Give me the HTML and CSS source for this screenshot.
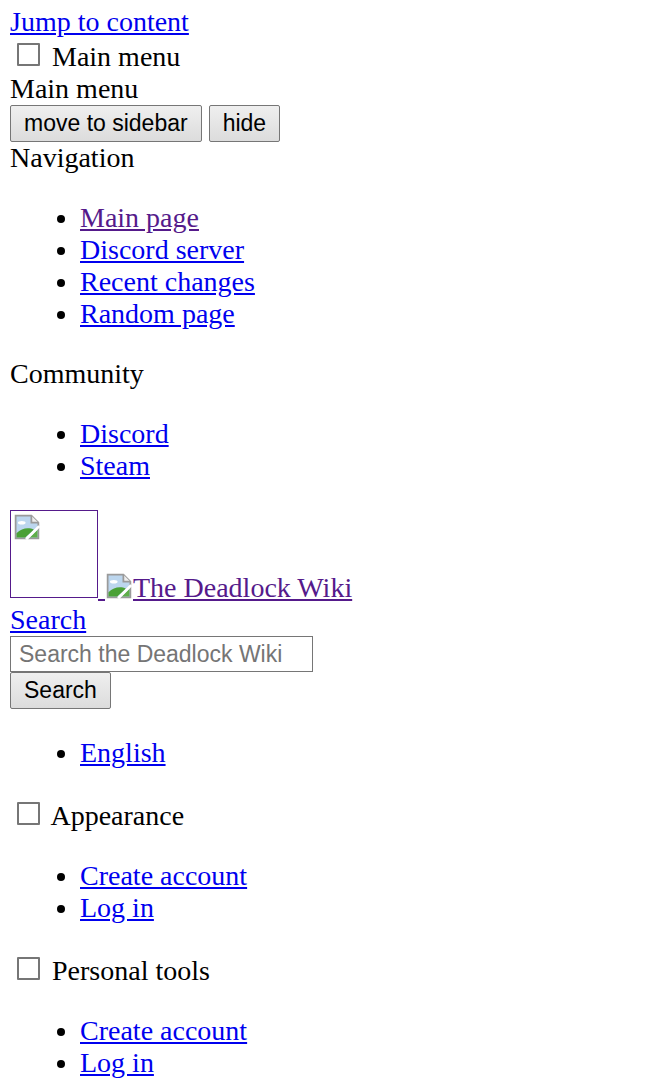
FILE: index.html
```html
<!DOCTYPE html>
<html lang="en">
<head>
    <meta charset="UTF-8">
    <title>The Deadlock Wiki</title>
    <link rel="stylesheet" href="styles.css">
</head>
<body>
    <a href="#content">Jump to content</a>
    <div>
        <input type="checkbox" id="main-menu-check"> <label for="main-menu-check">Main menu</label>
    </div>
    <div>Main menu</div>
    <div class="menu-actions">
        <button>move to sidebar</button> <button>hide</button>
    </div>
    <div>Navigation</div>
    <ul>
        <li><a class="visited" href="#">Main page</a></li>
        <li><a href="#">Discord server</a></li>
        <li><a href="#">Recent changes</a></li>
        <li><a href="#">Random page</a></li>
    </ul>
    <div>Community</div>
    <ul>
        <li><a href="#">Discord</a></li>
        <li><a href="#">Steam</a></li>
    </ul>

    <a class="visited logo" href="#"><span class="broken big"><svg class="broken-icon" viewBox="0 0 16 16"><path d="M1.5 1.5h9l4 4v9h-13z" fill="#bcd6ee" stroke="#9a9a9a"/><path d="M10.5 1.5v4h4" fill="#eee" stroke="#9a9a9a"/><ellipse cx="5" cy="5.5" rx="2.2" ry="1" fill="#fff"/><path d="M2 14V11.5c3-3 7-3.5 10-2L7 14z" fill="#4aa136"/><path d="M14 9.5L9.5 14h4.5z" fill="#5fae4a"/><path d="M15 7.5L7.5 15" stroke="#fff" stroke-width="1.6"/></svg></span> <span class="brand"><svg class="broken-icon" viewBox="0 0 16 16"><path d="M1.5 1.5h9l4 4v9h-13z" fill="#bcd6ee" stroke="#9a9a9a"/><path d="M10.5 1.5v4h4" fill="#eee" stroke="#9a9a9a"/><ellipse cx="5" cy="5.5" rx="2.2" ry="1" fill="#fff"/><path d="M2 14V11.5c3-3 7-3.5 10-2L7 14z" fill="#4aa136"/><path d="M14 9.5L9.5 14h4.5z" fill="#5fae4a"/><path d="M15 7.5L7.5 15" stroke="#fff" stroke-width="1.6"/></svg>The Deadlock Wiki</span></a>
    <div><a href="#">Search</a></div>
    <form class="search">
        <input type="text" placeholder="Search the Deadlock Wiki">
        <div><button type="button">Search</button></div>
    </form>
    <ul>
        <li><a href="#">English</a></li>
    </ul>
    <div>
        <input type="checkbox" id="appearance-check"> <label for="appearance-check">Appearance</label>
    </div>
    <ul>
        <li><a href="#">Create account</a></li>
        <li><a href="#">Log in</a></li>
    </ul>
    <div>
        <input type="checkbox" id="personal-check"> <label for="personal-check">Personal tools</label>
    </div>
    <ul>
        <li><a href="#">Create account</a></li>
        <li><a href="#">Log in</a></li>
    </ul>
</body>
</html>
```

FILE: styles.css
```css
body {
    margin: 6px 10px 10px;
    font-family: "Liberation Serif", "Times New Roman", serif;
    font-size: 28px;
    color: #000;
    background: #fff;
}
a {
    color: #0000ee;
}
a.visited {
    color: #551a8b;
}
ul {
    margin: 28px 0;
    padding-left: 70px;
}
input[type="checkbox"] {
    appearance: none;
    -webkit-appearance: none;
    box-sizing: border-box;
    width: 23px;
    height: 23px;
    margin: 5px 5px 5px 7px;
    border: 2px solid #767676;
    border-radius: 1px;
    background: #fff;
    vertical-align: -5px;
}
button {
    font-family: "Liberation Sans", Arial, sans-serif;
    font-size: 23px;
    line-height: 27px;
    padding: 4px 13px;
    border: 1px solid #767676;
    border-radius: 2px;
    background: linear-gradient(#efefef, #dcdcdc);
    color: #000;
}
.search input {
    font-family: "Liberation Sans", Arial, sans-serif;
    font-size: 23px;
    line-height: 26px;
    width: 285px;
    padding: 4px 8px;
    border: 1px solid #767676;
    margin: 0;
}
.search input::placeholder {
    color: #757575;
}
.broken {
    display: inline-block;
    box-sizing: border-box;
    border: 1px solid #551a8b;
    width: 88px;
    height: 88px;
    padding: 2px;
    margin-bottom: -1px;
}
.broken-icon {
    width: 28px;
    height: 28px;
    display: inline-block;
}
.broken .broken-icon {
    display: block;
}
.brand .broken-icon {
    vertical-align: -3px;
}
```
